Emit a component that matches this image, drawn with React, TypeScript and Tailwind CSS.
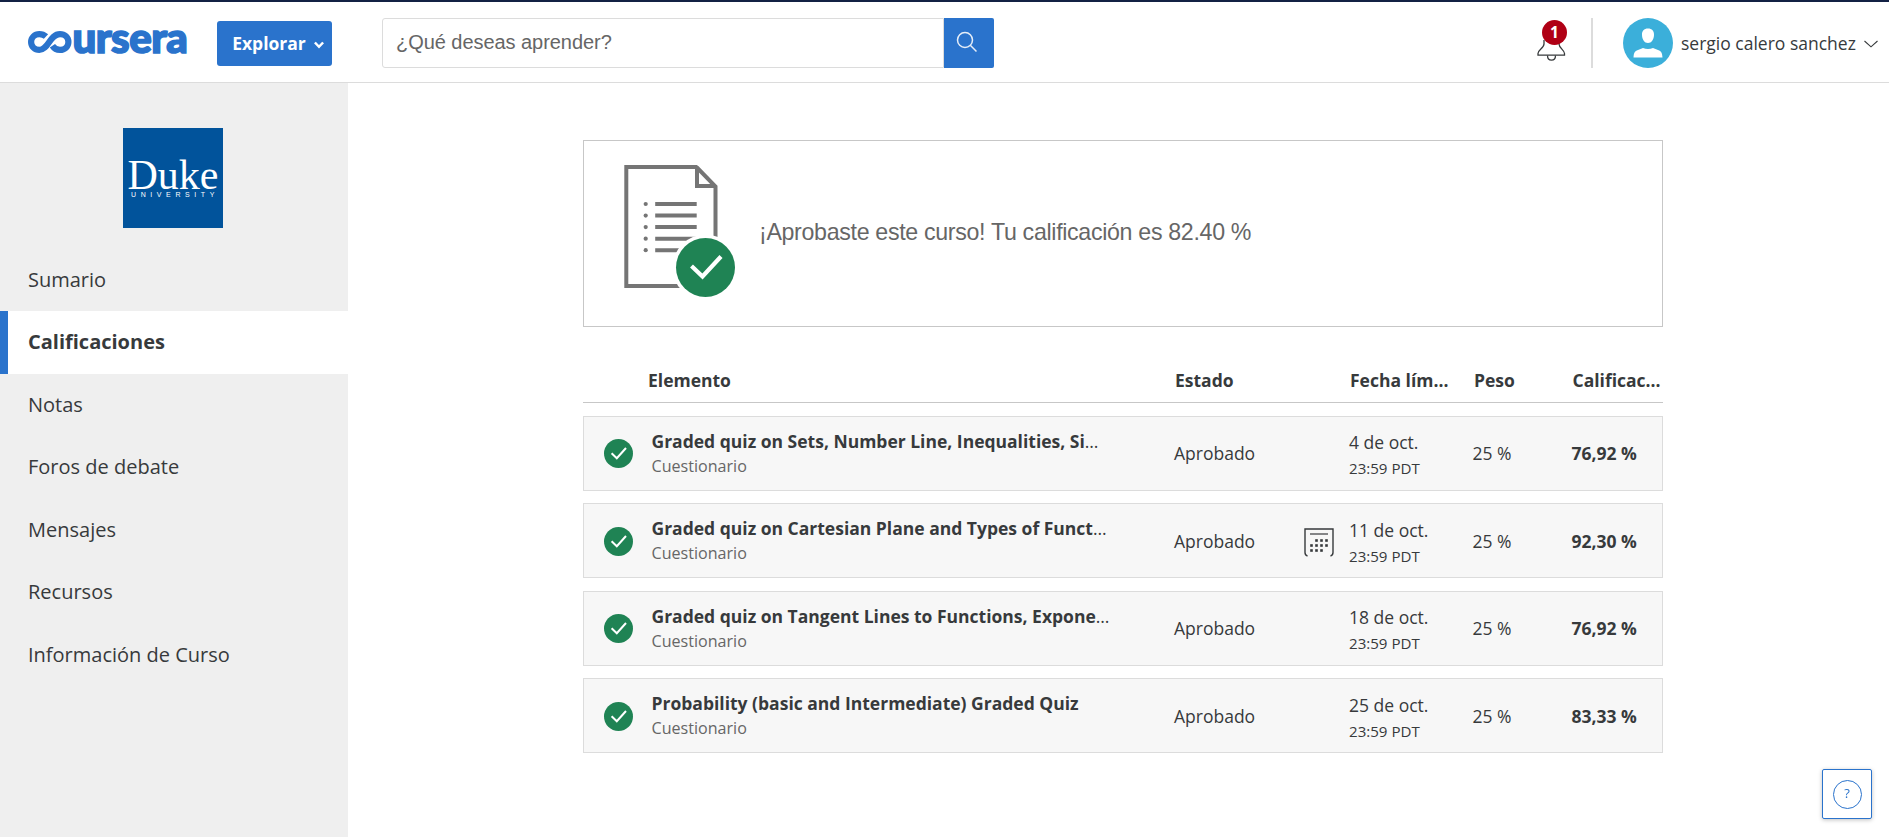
import React from 'react';

type Grade = { title: string; truncated: boolean; date: string; score: string; calendar: boolean; gap: string; inset: string };

const grades: Grade[] = [
  { title: 'Graded quiz on Sets, Number Line, Inequalities, Si', truncated: true, date: '4 de oct.', score: '76,92 %', calendar: false, gap: 'mt-[13px]', inset: 'mt-0' },
  { title: 'Graded quiz on Cartesian Plane and Types of Funct', truncated: true, date: '11 de oct.', score: '92,30 %', calendar: true, gap: 'mt-3', inset: 'mt-px' },
  { title: 'Graded quiz on Tangent Lines to Functions, Expone', truncated: true, date: '18 de oct.', score: '76,92 %', calendar: false, gap: 'mt-[13px]', inset: 'mt-0' },
  { title: 'Probability (basic and Intermediate) Graded Quiz', truncated: false, date: '25 de oct.', score: '83,33 %', calendar: false, gap: 'mt-3', inset: 'mt-px' },
];

const navItems = ['Sumario', 'Calificaciones', 'Notas', 'Foros de debate', 'Mensajes', 'Recursos', 'Información de Curso'];

function CourseraLogo() {
  return (
    <div className="flex h-[22px] w-[160px] items-center" aria-label="coursera">
      <svg width="44" height="22" viewBox="0 0 44 22" className="shrink-0" fill="none" stroke="#2a73cc" strokeWidth="6.2">
        <path d="M18 5.6 C16.2 3.9 14 3.1 11.3 3.1 C6.6 3.1 3.1 6.6 3.1 11 C3.1 15.4 6.6 18.9 11.3 18.9 C20.5 18.9 21.5 3.1 32 3.1 C36.8 3.1 40.4 6.5 40.4 11 C40.4 15.5 36.8 18.9 32 18.9 C28.6 18.9 26.2 17.6 24.4 14.8" />
      </svg>
      <span className="-mt-[10px] ml-[0.5px] font-[Lato,sans-serif] text-[42px] leading-none font-black tracking-[-0.5px] text-[#2a73cc] [-webkit-text-stroke:1.7px_#2a73cc]">ursera</span>
    </div>
  );
}

function CheckBadge() {
  return (
    <svg width="29" height="29" viewBox="0 0 29 29" className="shrink-0">
      <circle cx="14.5" cy="14.5" r="14.5" fill="#1f8354" />
      <path d="M7.6 14.2 L12.8 19.2 L22 9" fill="none" stroke="#fff" strokeWidth="2" />
    </svg>
  );
}

function CalendarIcon() {
  const dots: [number, number][] = [
    [11, 11], [16, 11], [21, 11],
    [6, 16], [11, 16], [16, 16], [21, 16],
    [6, 21], [11, 21], [16, 21],
  ];
  return (
    <svg width="30" height="29" viewBox="0 0 30 29" className="shrink-0" fill="none" stroke="#373a3c">
      <path d="M3.5 28 C1.6 27.5 1 26.5 1 24.5 V1 H29 V24.5 C29 26.5 28.4 27.5 26.5 28" strokeWidth="1.4" />
      <path d="M6 6 H24" strokeWidth="1.2" />
      {dots.map(([x, y]) => (
        <rect key={`${x}-${y}`} x={x + 0.2} y={y + 0.2} width="2.6" height="2.6" fill="#373a3c" stroke="none" />
      ))}
    </svg>
  );
}

function ReportIcon() {
  return (
    <svg width="112" height="134" viewBox="0 0 112 134" className="shrink-0" fill="none" stroke="#757575" strokeWidth="4">
      <path d="M73.5 2 H2.3 V121 H91.5 V21.5 L73 2.5 V21 H91.5" />
      <path d="M31.2 39 H72.7 M31.2 50.6 H72.7 M31.2 62.1 H72.7 M31.2 73.7 H72.7 M31.2 85.2 H72.7" />
      {[39, 50.6, 62.1, 73.7, 85.2].map((y) => (
        <circle key={y} cx="21.7" cy={y} r="2.1" fill="#757575" stroke="none" />
      ))}
      <circle cx="81.5" cy="102.5" r="33" fill="#fff" stroke="none" />
      <circle cx="81.5" cy="102.5" r="29.5" fill="#1f8354" stroke="none" />
      <path d="M67.5 101 L78.5 111.5 L97 91.5" stroke="#fff" strokeWidth="4.2" />
    </svg>
  );
}

function Header() {
  return (
    <header className="flex h-[83px] shrink-0 items-start border-t-2 border-b border-t-[#132144] border-b-[#dcdcdc] bg-white">
      <div className="mt-[29px] ml-7"><CourseraLogo /></div>
      <button className="mt-[19px] ml-[29px] flex h-[45px] w-[115px] items-center rounded-[3px] bg-[#2a73cc] pl-[14.5px] text-white">
        <span className="w-[75px] text-[17.5px] font-bold">Explorar</span>
        <svg width="10" height="8" viewBox="0 0 10 8" className="mt-[3px] ml-[7px]" fill="none" stroke="#fff" strokeWidth="2.5"><path d="M0.9 1.5 L5 5.8 L9.1 1.5" /></svg>
      </button>
      <div className="mt-4 ml-[50px] flex h-[50px] w-[612px]">
        <div className="flex flex-1 items-center rounded-l-[3px] border border-[#dcdcdc] pb-[3px] pl-[13px] font-['Liberation_Sans',sans-serif] text-[20px] tracking-[-0.05px] text-[#666]">¿Qué deseas aprender?</div>
        <button className="flex w-[50px] items-center justify-center rounded-r-[2px] bg-[#2a73cc]">
          <svg width="22" height="22" viewBox="0 0 22 22" className="-mt-[2px] -ml-[5px]" fill="none" stroke="#e6eef8" strokeWidth="1.5"><circle cx="9" cy="9" r="7.5" /><path d="M14.3 14.3 L20.5 20.5" /></svg>
        </button>
      </div>
      <div className="ml-auto flex h-[82px] items-start">
        <div className="relative mt-[18px] h-[42px] w-[30px]">
          <svg width="30" height="42" viewBox="0 0 30 42" fill="none" stroke="#373a3c" strokeWidth="1.3">
            <path d="M7 20 V24 C7 28 1 30 1 33.5 V35.2 H27.5 V33.5 C27.5 30 22 28 22 24 V20" />
            <path d="M10.5 35.5 C10.5 41.7 18.5 41.7 18.5 35.5" />
          </svg>
          <span className="absolute top-0 left-[5px] flex size-[25px] items-center justify-center rounded-full bg-[#b00015] text-[15.5px] leading-none font-bold text-white">1</span>
        </div>
        <div className="mt-4 ml-[24px] h-[50px] w-[2px] bg-[#dcdcdc]" />
        <svg width="50" height="50" viewBox="0 0 50 50" className="mt-4 ml-[30px]">
          <circle cx="25" cy="25" r="25" fill="#3bafda" />
          <path d="M25 10.5 C29 10.5 31.2 13 31 17 C30.8 21.5 28.5 25 25 25 C21.5 25 19.2 21.5 19 17 C18.8 13 21 10.5 25 10.5 Z M10.5 39.5 C10.8 35 11.5 33 15 32 L20 30 C23 31.2 27 31.2 30 30 L35 32 C38.5 33 39.2 35 39.5 39.5 Z" fill="#fff" />
        </svg>
        <span className="mt-[28px] ml-2 w-[183px] text-[17.5px] leading-[26px] whitespace-nowrap text-[#373a3c]">sergio calero sanchez</span>
        <svg width="14" height="8" viewBox="0 0 14 8" className="mt-[38px] mr-[11px]" fill="none" stroke="#373a3c" strokeWidth="1.1"><path d="M0.5 1 L7 6.8 L13.5 1" /></svg>
      </div>
    </header>
  );
}

function Sidebar() {
  return (
    <aside className="w-[348px] shrink-0 bg-[#efefef] pt-[45px]">
      <div className="ml-[123px] flex size-[100px] flex-col items-center bg-[#01539b] pt-[32px] text-white">
        <span className="font-['Liberation_Serif',serif] text-[42px] leading-[30px]">Duke</span>
        <span className="mt-px ml-[4px] font-['Liberation_Sans',sans-serif] text-[7px] leading-[8px] tracking-[4.6px]">UNIVERSITY</span>
      </div>
      <nav className="mt-[20.5px] flex flex-col">
        {navItems.map((item) =>
          item === 'Calificaciones' ? (
            <a key={item} className="flex h-[62.5px] items-center border-l-8 border-[#2a73cc] bg-white pl-5 text-[20px] font-bold text-[#373a3c]">{item}</a>
          ) : (
            <a key={item} className="flex h-[62.5px] items-center pl-7 text-[20px] text-[#373a3c]">{item}</a>
          ),
        )}
      </nav>
    </aside>
  );
}

function GradeRow({ grade }: { grade: Grade }) {
  return (
    <div className={`${grade.gap} flex h-[75px] border border-[#dcdcdc] bg-[#f7f7f7] text-[#373a3c]`}>
      <div className={`${grade.inset} ml-[19.5px] w-[48px] shrink-0 pt-[21.5px]`}><CheckBadge /></div>
      <div className="mt-[12px] w-[522.5px] shrink-0 whitespace-nowrap">
        <div className="h-[25px] text-[17.5px] leading-[25px]"><span className="font-bold">{grade.title}</span>{grade.truncated && '…'}</div>
        <div className="text-[16.1px] leading-[24px] text-[#666]">Cuestionario</div>
      </div>
      <div className={`${grade.inset} flex text-[17.5px] leading-[26px]`}>
        <div className="w-[130px] shrink-0 pt-[23px]">Aprobado</div>
        <div className="w-[45px] shrink-0 pt-[23px]">{grade.calendar && <CalendarIcon />}</div>
        <div className="w-[123.5px] shrink-0 pt-[12px]">
          <div>{grade.date}</div>
          <div className="text-[15.1px] leading-[27px]">23:59 PDT</div>
        </div>
        <div className="w-[99px] shrink-0 pt-[23px]">25 %</div>
        <div className="shrink-0 pt-[23px] font-bold">{grade.score}</div>
      </div>
    </div>
  );
}

export default function App() {
  return (
    <div className="flex h-[837px] w-full flex-col overflow-hidden bg-white font-['Open_Sans',sans-serif]">
      <Header />
      <div className="flex flex-1">
        <Sidebar />
        <main className="ml-[235px] w-[1080px] shrink-0 pt-[57px]">
          <section className="flex h-[187px] border border-[#c7c7c7]">
            <div className="mt-6 ml-10 w-[135px]"><ReportIcon /></div>
            <p className="mt-[76px] font-['Liberation_Sans',sans-serif] text-[23.2px] leading-[30px] tracking-[-0.32px] whitespace-nowrap text-[#666]">¡Aprobaste este curso! Tu calificación es 82.40 %</p>
          </section>
          <div className="mt-[35px] flex h-[41px] border-b border-[#c7c7c7] pl-[65px] text-[17.5px] leading-[36px] font-bold whitespace-nowrap text-[#373a3c]">
            <div className="w-[527px]">Elemento</div>
            <div className="w-[175px]">Estado</div>
            <div className="w-[124px]">Fecha lím...</div>
            <div className="w-[98.5px]">Peso</div>
            <div>Calificac...</div>
          </div>
          {grades.map((grade) => <GradeRow key={grade.title} grade={grade} />)}
        </main>
      </div>
      <button className="fixed right-[17px] bottom-[18px] flex size-[50px] items-center justify-center rounded-[2px] border border-[#2a73cc] bg-white shadow-[0_1px_4px_rgba(0,0,0,0.25)]">
        <span className="flex size-[29px] items-center justify-center rounded-full border border-[#2a73cc] text-[13px] text-[#2a73cc]">?</span>
      </button>
    </div>
  );
}
